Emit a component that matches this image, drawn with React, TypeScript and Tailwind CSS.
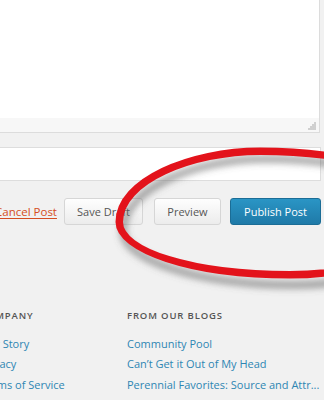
import React from 'react'

const Button = ({ label, className }: { label: string; className: string }) => (
    <button className={`h-[27px] shrink-0 rounded-[3px] border text-[11px] leading-none ${className}`}>{label}</button>
)

const App = () => {
    return (
        <div className="relative w-[324px] h-[400px] overflow-hidden bg-[#f1f1f1] font-['Open_Sans',sans-serif]">
            {/* Editor area */}
            <div className="-ml-[30px] w-[350px]">
                <div className="h-[133px] bg-white border-r border-b border-[#dcdcdc] flex flex-col">
                    <div className="flex-1" />
                    <div className="h-[14px] bg-[#f7f7f7] flex justify-end items-end pr-[3px] pb-[2px]">
                        <svg width="8" height="9" viewBox="0 0 8 9">
                            <path d="M7 1v8M5 3v6M3 5v4M1 7v2" stroke="#a8a8a8" strokeWidth="1" />
                        </svg>
                    </div>
                </div>
                <div className="mt-[14px] h-[34px] w-[351px] bg-white border border-[#dddddd]" />
            </div>

            {/* Actions */}
            <div className="mt-[17px] flex items-center -ml-[5px] whitespace-nowrap">
                <a href="#" className="shrink-0 text-[11.5px] text-[#d54e21] underline underline-offset-2">
                    Cancel Post
                </a>
                <Button
                    label="Save Draft"
                    className="ml-[7px] w-[79px] bg-gradient-to-b from-[#fefefe] to-[#ececec] border-[#d6d6d6] text-[#555]"
                />
                <Button
                    label="Preview"
                    className="ml-[11px] w-[67px] bg-gradient-to-b from-[#fefefe] to-[#ececec] border-[#d6d6d6] text-[#555]"
                />
                <Button
                    label="Publish Post"
                    className="ml-[9px] w-[91px] bg-gradient-to-b from-[#2a95c5] to-[#1f7aa8] border-[#1b6d96] text-white"
                />
            </div>

            {/* Footer */}
            <div className="mt-[86px] flex -ml-[20px] whitespace-nowrap">
                <div className="w-[147px] shrink-0">
                    <h4 className="text-[9.5px] font-semibold uppercase tracking-[0.09em] text-[#555] leading-none">Company</h4>
                    <ul className="mt-[15px] space-y-[5px] text-[11px] text-[#2e86b3] leading-[15.5px]">
                        <li>Our Story</li>
                        <li>Privacy</li>
                        <li>Terms of Service</li>
                    </ul>
                </div>
                <div>
                    <h4 className="text-[9.5px] font-semibold uppercase tracking-[0.09em] text-[#555] leading-none">From Our Blogs</h4>
                    <ul className="mt-[15px] space-y-[5px] text-[11px] text-[#2e86b3] leading-[15.5px]">
                        <li>Community Pool</li>
                        <li>Can’t Get it Out of My Head</li>
                        <li>Perennial Favorites: Source and Attr...</li>
                    </ul>
                </div>
            </div>

            {/* Red hand-drawn circle */}
            <svg className="absolute left-0 top-0 pointer-events-none" width="324" height="400" viewBox="0 0 324 400">
                <defs>
                    <filter id="shadow" x="-20%" y="-20%" width="140%" height="140%">
                        <feGaussianBlur stdDeviation="3.5" />
                    </filter>
                </defs>
                <path
                    d="M118,222 C118,180 190,150 260,150 C340,150 430,170 430,210 C430,250 360,276 290,276 C190,276 118,250 118,222 Z"
                    fill="none"
                    stroke="#5f5f5f"
                    strokeOpacity="0.6"
                    strokeWidth="7"
                    filter="url(#shadow)"
                    transform="translate(5 9)"
                />
                <path
                    d="M118,222 C118,180 190,150 260,150 C340,150 430,170 430,210 C430,250 360,276 290,276 C190,276 118,250 118,222 Z"
                    fill="none"
                    stroke="#e3131b"
                    strokeWidth="5"
                />
                <path
                    d="M121,222 C121,182 192,153 260,153 C340,153 430,172 430,210 C430,248 360,273 290,273 C192,273 121,250 121,222 Z"
                    fill="none"
                    stroke="#e3131b"
                    strokeWidth="4"
                />
            </svg>
        </div>
    )
}

export default App
